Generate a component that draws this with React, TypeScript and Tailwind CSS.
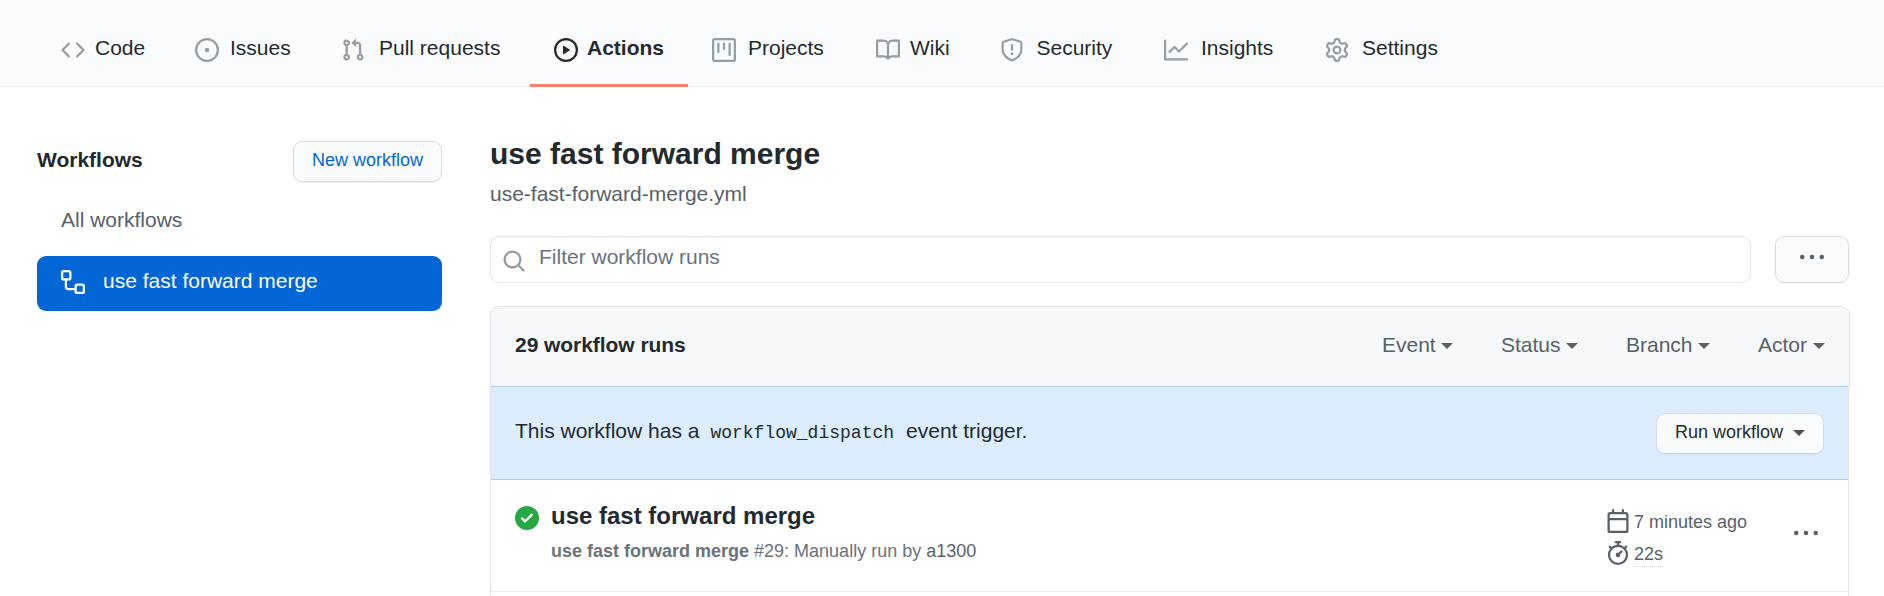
import React from "react";

const paths = {
  code: "M4.72 3.22a.75.75 0 011.06 1.06L2.06 8l3.72 3.72a.75.75 0 11-1.06 1.06L.47 8.53a.75.75 0 010-1.06l4.25-4.25zm6.56 0a.75.75 0 10-1.06 1.06L13.94 8l-3.72 3.72a.75.75 0 101.06 1.06l4.25-4.25a.75.75 0 000-1.06l-4.25-4.25z",
  issue: "M8 9.5a1.5 1.5 0 100-3 1.5 1.5 0 000 3zM8 0a8 8 0 100 16A8 8 0 008 0zM1.5 8a6.5 6.5 0 1113 0 6.5 6.5 0 01-13 0z",
  pull: "M7.177 3.073L9.573.677A.25.25 0 0110 .854v4.792a.25.25 0 01-.427.177L7.177 3.427a.25.25 0 010-.354zM3.75 2.5a.75.75 0 100 1.5.75.75 0 000-1.5zm-2.25.75a2.25 2.25 0 113 2.122v5.256a2.251 2.251 0 11-1.5 0V5.372A2.25 2.25 0 011.5 3.25zM11 2.5h-1V4h1a1 1 0 011 1v5.628a2.251 2.251 0 101.5 0V5A2.5 2.5 0 0011 2.5zm1 10.25a.75.75 0 111.5 0 .75.75 0 01-1.5 0zM3.75 12a.75.75 0 100 1.5.75.75 0 000-1.5z",
  play: "M1.5 8a6.5 6.5 0 1113 0 6.5 6.5 0 01-13 0zM8 0a8 8 0 100 16A8 8 0 008 0zM6.379 5.227A.25.25 0 006 5.442v5.117a.25.25 0 00.379.214l4.264-2.559a.25.25 0 000-.428L6.379 5.227z",
  project: "M1.75 0A1.75 1.75 0 000 1.75v12.5C0 15.216.784 16 1.75 16h12.5A1.75 1.75 0 0016 14.25V1.75A1.75 1.75 0 0014.25 0H1.75zM1.5 1.75a.25.25 0 01.25-.25h12.5a.25.25 0 01.25.25v12.5a.25.25 0 01-.25.25H1.75a.25.25 0 01-.25-.25V1.75zM11.75 3a.75.75 0 00-.75.75v7.5a.75.75 0 001.5 0v-7.5a.75.75 0 00-.75-.75zm-8.25.75a.75.75 0 011.5 0v5.5a.75.75 0 01-1.5 0v-5.5zM8 3a.75.75 0 00-.75.75v3.5a.75.75 0 001.5 0v-3.5A.75.75 0 008 3z",
  book: "M0 1.75A.75.75 0 01.75 1h4.253c1.227 0 2.317.59 3 1.501A3.744 3.744 0 0111.006 1h4.245a.75.75 0 01.75.75v10.5a.75.75 0 01-.75.75h-4.507a2.25 2.25 0 00-1.591.659l-.622.621a.75.75 0 01-1.06 0l-.622-.621A2.25 2.25 0 005.258 13H.75a.75.75 0 01-.75-.75V1.75zm8.755 3a2.25 2.25 0 012.25-2.25H14.5v9h-3.757c-.71 0-1.4.201-1.992.572l.004-7.322zm-1.504 7.324l.004-5.073-.002-2.253A2.25 2.25 0 005.003 2.5H1.5v9h3.757a3.75 3.75 0 011.994.574z",
  shield: "M7.467.133a1.75 1.75 0 011.066 0l5.25 1.68A1.75 1.75 0 0115 3.48V7c0 1.566-.32 3.182-1.303 4.682-.983 1.498-2.585 2.813-5.032 3.855a1.7 1.7 0 01-1.33 0c-2.447-1.042-4.049-2.357-5.032-3.855C1.32 10.182 1 8.566 1 7V3.48a1.75 1.75 0 011.217-1.667l5.25-1.68zm.61 1.429a.25.25 0 00-.153 0l-5.25 1.68a.25.25 0 00-.174.238V7c0 1.358.275 2.666 1.057 3.86.784 1.194 2.121 2.34 4.366 3.297a.2.2 0 00.154 0c2.245-.956 3.582-2.104 4.366-3.298C13.225 9.666 13.5 8.36 13.5 7V3.48a.25.25 0 00-.174-.237l-5.25-1.68zM9 10.5a1 1 0 11-2 0 1 1 0 012 0zm-.25-5.75a.75.75 0 10-1.5 0v3a.75.75 0 001.5 0v-3z",
  graph: "M1.5 1.75a.75.75 0 00-1.5 0v12.5c0 .414.336.75.75.75h14.5a.75.75 0 000-1.5H1.5V1.75zm14.28 2.53a.75.75 0 00-1.06-1.06L10 7.94 7.53 5.47a.75.75 0 00-1.06 0L3.22 8.72a.75.75 0 001.06 1.06L7 7.06l2.47 2.47a.75.75 0 001.06 0l5.25-5.25z",
  gear: "M7.429 1.525a6.593 6.593 0 011.142 0c.036.003.108.036.137.146l.289 1.105c.147.56.55.967.997 1.189.174.086.341.183.501.29.417.278.97.423 1.53.27l1.102-.303c.11-.03.175.016.195.046.219.31.41.641.573.989.014.031.022.11-.059.19l-.815.806c-.411.406-.562.957-.53 1.456a4.588 4.588 0 010 .582c-.032.499.119 1.05.53 1.456l.815.806c.08.08.073.159.059.19a6.494 6.494 0 01-.573.99c-.02.029-.086.074-.195.045l-1.103-.303c-.559-.153-1.112-.008-1.529.27-.16.107-.327.204-.5.29-.449.222-.851.628-.998 1.189l-.289 1.105c-.029.11-.101.143-.137.146a6.613 6.613 0 01-1.142 0c-.036-.003-.108-.037-.137-.146l-.289-1.105c-.147-.56-.55-.967-.997-1.189a4.502 4.502 0 01-.501-.29c-.417-.278-.97-.423-1.53-.27l-1.102.303c-.11.03-.175-.016-.195-.046a6.492 6.492 0 01-.573-.989c-.014-.031-.022-.11.059-.19l.815-.806c.411-.406.562-.957.53-1.456a4.587 4.587 0 010-.582c.032-.499-.119-1.05-.53-1.456l-.815-.806c-.08-.08-.073-.159-.059-.19a6.44 6.44 0 01.573-.99c.02-.029.086-.075.195-.045l1.103.303c.559.153 1.112.008 1.529-.27.16-.107.327-.204.5-.29.449-.222.851-.628.998-1.189l.289-1.105c.029-.11.101-.143.137-.146zM8 0c-.236 0-.47.01-.701.03-.743.065-1.29.615-1.458 1.261l-.29 1.106c-.017.066-.078.158-.211.224a5.994 5.994 0 00-.668.386c-.123.082-.233.09-.3.071L3.27 2.776c-.644-.177-1.392.02-1.82.63a7.977 7.977 0 00-.704 1.217c-.315.675-.111 1.422.363 1.891l.815.806c.05.048.098.147.088.294a6.084 6.084 0 000 .772c.01.147-.038.246-.088.294l-.815.806c-.474.469-.678 1.216-.363 1.891.2.428.436.835.704 1.218.428.609 1.176.806 1.82.63l1.103-.303c.066-.019.176-.011.299.071.213.143.436.272.668.386.133.066.194.158.212.224l.289 1.106c.169.646.715 1.196 1.458 1.26a8.094 8.094 0 001.402 0c.743-.064 1.29-.614 1.458-1.26l.29-1.106c.017-.066.078-.158.211-.224a5.98 5.98 0 00.668-.386c.123-.082.233-.09.3-.071l1.102.302c.644.177 1.392-.02 1.82-.63.268-.382.505-.789.704-1.217.315-.675.111-1.422-.364-1.891l-.814-.806c-.05-.048-.098-.147-.088-.294a6.1 6.1 0 000-.772c-.01-.147.039-.246.088-.294l.814-.806c.475-.469.679-1.216.364-1.891a7.992 7.992 0 00-.704-1.218c-.428-.609-1.176-.806-1.82-.63l-1.103.303c-.066.019-.176.011-.299-.071a5.991 5.991 0 00-.668-.386c-.133-.066-.194-.158-.212-.224L10.16 1.29C9.99.645 9.444.095 8.701.031A8.094 8.094 0 008 0zm1.5 8a1.5 1.5 0 11-3 0 1.5 1.5 0 013 0zM11 8a3 3 0 11-6 0 3 3 0 016 0z",
  workflow: "M0 1.75C0 .784.784 0 1.75 0h3.5C6.216 0 7 .784 7 1.75v3.5A1.75 1.75 0 015.25 7H4v4a1 1 0 001 1h4v-1.25C9 9.784 9.784 9 10.75 9h3.5c.966 0 1.75.784 1.75 1.75v3.5A1.75 1.75 0 0114.25 16h-3.5A1.75 1.75 0 019 14.25v-.75H5A2.5 2.5 0 012.5 11V7h-.75A1.75 1.75 0 010 5.25v-3.5zm1.75-.25a.25.25 0 00-.25.25v3.5c0 .138.112.25.25.25h3.5a.25.25 0 00.25-.25v-3.5a.25.25 0 00-.25-.25h-3.5zm9 9a.25.25 0 00-.25.25v3.5c0 .138.112.25.25.25h3.5a.25.25 0 00.25-.25v-3.5a.25.25 0 00-.25-.25h-3.5z",
  search: "M11.5 7a4.499 4.499 0 11-8.998 0A4.499 4.499 0 0111.5 7zm-.82 4.74a6 6 0 111.06-1.06l3.04 3.04a.75.75 0 11-1.06 1.06l-3.04-3.04z",
  kebab: "M8 9.5a1.5 1.5 0 100-3 1.5 1.5 0 000 3zM1.5 9.5a1.5 1.5 0 100-3 1.5 1.5 0 000 3zm13 0a1.5 1.5 0 100-3 1.5 1.5 0 000 3z",
  check: "M8 16A8 8 0 108 0a8 8 0 000 16zm3.78-9.72a.75.75 0 00-1.06-1.06L6.75 9.19 5.28 7.72a.75.75 0 00-1.06 1.06l2 2a.75.75 0 001.06 0l4.5-4.5z",
  calendar: "M4.75 0a.75.75 0 01.75.75V2h5V.75a.75.75 0 011.5 0V2h1.25c.966 0 1.75.784 1.75 1.75v10.5A1.75 1.75 0 0113.25 16H2.75A1.75 1.75 0 011 14.25V3.75C1 2.784 1.784 2 2.75 2H4V.75A.75.75 0 014.75 0zm0 3.5h8.5a.25.25 0 01.25.25V6h-11V3.75a.25.25 0 01.25-.25h2zm-2.25 4v6.75c0 .138.112.25.25.25h10.5a.25.25 0 00.25-.25V7.5h-11z",
  stopwatch: "M5.75.75A.75.75 0 016.5 0h3a.75.75 0 010 1.5h-.75v1l-.001.041a6.718 6.718 0 013.464 1.435l.007-.006.75-.75a.75.75 0 111.06 1.06l-.75.75-.006.007a6.75 6.75 0 11-10.548 0L2.72 5.03l-.75-.75a.75.75 0 011.06-1.06l.75.75.007.006A6.718 6.718 0 017.25 2.541a.756.756 0 010-.041v-1H6.5a.75.75 0 01-.75-.75zM8 14.5A5.25 5.25 0 108 4a5.25 5.25 0 000 10.5zm.389-6.7l1.33-1.33a.75.75 0 111.061 1.06L9.45 8.861A1.502 1.502 0 018 10.75a1.5 1.5 0 11.389-2.95z",
};

type IconName = keyof typeof paths;

function Icon({ name, className = "" }: { name: IconName; className?: string }) {
  return (
    <svg viewBox="0 0 16 16" className={`shrink-0 overflow-visible ${className}`} fill="currentColor" aria-hidden="true">
      <path fillRule="evenodd" d={paths[name]} />
    </svg>
  );
}

function Caret({ className = "" }: { className?: string }) {
  return <span className={`h-0 w-0 shrink-0 border-x-[6px] border-t-[6px] border-x-transparent border-t-current ${className}`} />;
}

const tabs: { label: string; icon: IconName; box: string; active?: boolean }[] = [
  { label: "Code", icon: "code", box: "w-[134px] gap-[10px]" },
  { label: "Issues", icon: "issue", box: "w-[146px] gap-[11px]" },
  { label: "Pull requests", icon: "pull", box: "w-[189px] gap-[14px]" },
  { label: "Actions", icon: "play", box: "w-[158px] gap-[9px] pl-6", active: true },
  { label: "Projects", icon: "project", box: "ml-6 w-[164px] gap-[12px]" },
  { label: "Wiki", icon: "book", box: "w-[123.5px] gap-[10px]" },
  { label: "Security", icon: "shield", box: "w-[164.5px] gap-[13px]" },
  { label: "Insights", icon: "graph", box: "w-[161px] gap-[13px]" },
  { label: "Settings", icon: "gear", box: "w-[160px] gap-[13px]" },
];

const filters = [
  { label: "Event", box: "w-[71px]" },
  { label: "Status", box: "w-[77px]" },
  { label: "Branch", box: "w-[84px]" },
  { label: "Actor", box: "w-[67px]" },
];

export default function App() {
  return (
    <div className="h-[596px] w-[1884px] overflow-hidden bg-white font-['Liberation_Sans',Arial,sans-serif] text-[21px] text-[#24292e]">
      <nav className="flex h-[87px] border-b border-[#eaecef] bg-[#fafbfc] pl-[61px]">
        {tabs.map((t) => (
          <a
            key={t.label}
            className={`flex h-[87px] shrink-0 items-start whitespace-nowrap pt-[38px] leading-5 ${t.box} ${
              t.active ? "border-b-[3px] border-[#f9826c] font-bold" : ""
            }`}
          >
            <Icon name={t.icon} className={`size-6 ${t.active ? "" : "text-[#959da5]"}`} />
            <span>{t.label}</span>
          </a>
        ))}
      </nav>

      <div className="flex gap-12 pl-[37px]">
        <aside className="w-[405px] shrink-0 pt-[54px]">
          <div className="flex items-start justify-between">
            <h2 className="pt-[7px] font-bold leading-6">Workflows</h2>
            <button className="h-[41px] w-[149px] rounded-[9px] border border-[#d7dade] bg-[#fafbfc] pb-1 text-lg leading-6 text-[#0366d6] shadow-[0_1px_1px_rgba(27,31,35,0.06)]">
              New workflow
            </button>
          </div>
          <div className="mt-[26px] pl-6 leading-6 text-[#586069]">All workflows</div>
          <div className="mt-[24px] flex h-[55px] items-start gap-[18px] rounded-[9px] bg-[#0366d6] pl-6 pt-[14px] leading-[22px] text-white">
            <Icon name="workflow" className="size-6" />
            <span>use fast forward merge</span>
          </div>
        </aside>

        <main className="w-[1360px] shrink-0 pt-[49px]">
          <h1 className="text-[30px] font-bold leading-9">use fast forward merge</h1>
          <div className="mt-[10px] leading-6 text-[#586069]">use-fast-forward-merge.yml</div>

          <div className="mt-[30px] flex gap-6">
            <div className="flex h-[47px] w-[1261px] items-start gap-[13px] rounded-[9px] border border-[#e1e4e8] pl-[11px] pt-[8px] leading-6 text-[#6a737d] shadow-[inset_0_1px_0_rgba(225,228,232,0.3)]">
              <Icon name="search" className="mt-[4px] size-6 text-[#959da5]" />
              <span>Filter workflow runs</span>
            </div>
            <button className="flex h-[47px] w-[74px] justify-center rounded-[9px] border border-[#d7dade] bg-[#fafbfc] pt-[8px] text-[#586069] shadow-[0_1px_1px_rgba(27,31,35,0.05)]">
              <Icon name="kebab" className="size-6" />
            </button>
          </div>

          <section className="mt-[23px]">
            <header className="flex h-[81px] items-start justify-between rounded-t-[9px] border border-b-0 border-[#e1e4e8] bg-[#f6f8fa] px-6 pt-[26px] leading-6">
              <h3 className="font-bold tracking-[-0.05px]">29 workflow runs</h3>
              <div className="flex gap-12 text-[#586069]">
                {filters.map((f) => (
                  <span key={f.label} className={`flex items-center justify-between ${f.box}`}>
                    {f.label}
                    <Caret className="mt-[2px]" />
                  </span>
                ))}
              </div>
            </header>
            <div className="-mt-px w-[1359px] border-x border-[#e1e4e8]">
              <div className="flex h-[94px] items-start justify-between border-y border-[#afcbe9] bg-[#dbedff] px-6 pt-[26px]">
                <p className="flex leading-[36px]">
                  <span className="mr-[11px]">This workflow has a</span>
                  <code className="mr-[12px] mt-[2px] font-['Liberation_Mono',monospace] text-lg leading-[36px]">workflow_dispatch</code>
                  <span>event trigger.</span>
                </p>
                <button className="flex h-[41px] w-[168px] justify-between rounded-[9px] border border-[#d7dade] bg-[#fafbfc] px-[18px] pt-[6px] text-lg leading-6 shadow-[0_1px_1px_rgba(27,31,35,0.06)]">
                  Run workflow
                  <Caret className="mt-[10px] text-[#4a4f54]" />
                </button>
              </div>
              <div className="flex h-[112px] items-start border-b border-[#eaecef] pl-6">
                <Icon name="check" className="mt-[26px] size-6 text-[#28a745]" />
                <div className="ml-3 w-[1055px] pt-[21px]">
                  <div className="text-2xl font-bold leading-[30px]">use fast forward merge</div>
                  <div className="mt-[8px] text-lg leading-6 text-[#6a737d]">
                    <b>use fast forward merge</b> #29: Manually run by <span className="text-[#586069]">a1300</span>
                  </div>
                </div>
                <div className="w-[188px] pt-[29px] text-lg leading-6 text-[#586069]">
                  <div className="flex items-start gap-1">
                    <Icon name="calendar" className="size-6" />
                    <span className="pt-px">7 minutes ago</span>
                  </div>
                  <div className="mt-[7px] flex items-start gap-1">
                    <Icon name="stopwatch" className="size-6" />
                    <span className="mt-px border-b border-dotted border-[#d1d5da]">22s</span>
                  </div>
                </div>
                <Icon name="kebab" className="mt-[41px] size-6 text-[#586069]" />
              </div>
              <div className="h-24" />
            </div>
          </section>
        </main>
      </div>
    </div>
  );
}
